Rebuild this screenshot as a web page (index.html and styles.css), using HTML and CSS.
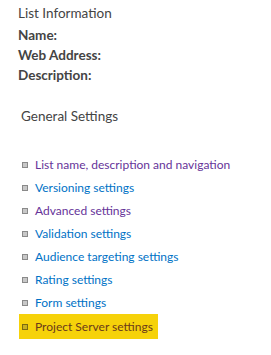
FILE: index.html
```html
<!DOCTYPE html>
<html lang="en">
<head>
    <meta charset="UTF-8">
    <title>List Settings</title>
    <link rel="stylesheet" href="styles.css">
</head>
<body>

    <!-- List information -->
    <div class="list-info">
        <h3 class="info-title">List Information</h3>
        <div class="info-row">Name:</div>
        <div class="info-row">Web Address:</div>
        <div class="info-row">Description:</div>
    </div>

    <!-- General settings -->
    <div class="settings">
        <h3 class="settings-title">General Settings</h3>
        <ul class="settings-list">
            <li><a href="#" class="visited">List name, description and navigation</a></li>
            <li><a href="#">Versioning settings</a></li>
            <li><a href="#" class="visited">Advanced settings</a></li>
            <li><a href="#">Validation settings</a></li>
            <li><a href="#">Audience targeting settings</a></li>
            <li><a href="#">Rating settings</a></li>
            <li><a href="#">Form settings</a></li>
            <li class="highlight"><a href="#">Project Server settings</a></li>
        </ul>
    </div>

</body>
</html>
```

FILE: styles.css
```css
:root {
    --txt-color: #444;
    --link-color: #0072c6;
    --visited-color: #663399;
    --mark-color: #f6d20a;
}

body {
    font-family: 'Lato', 'Noto Sans', sans-serif;
    font-size: 12px;
    color: var(--txt-color);
    background-color: #fff;
    margin: 0;
    padding: 0;
}

h3 {
    font-weight: normal;
    font-size: 13.5px;
    margin: 0;
}

.list-info {
    padding: 4px 0 0 18px;
}

.info-title {
    line-height: 18px;
    margin-bottom: 3px;
}

.info-row {
    font-weight: bold;
    font-size: 13.5px;
    line-height: 20px;
}

.settings {
    padding: 21px 0 0 21px;
}

.settings-title {
    line-height: 20px;
}

.settings-list {
    list-style: none;
    margin: 27px 0 0 0;
    padding: 0;
}

.settings-list li {
    display: flex;
    align-items: center;
    gap: 7px;
    height: 23px;
    width: 136px;
    white-space: nowrap;
    padding-left: 1px;
}

.settings-list li::before {
    content: '';
    width: 4px;
    height: 4px;
    border: 1px solid #8a8a8a;
    background-color: #c8c8c8;
    flex-shrink: 0;
}

.settings-list a {
    color: var(--link-color);
    text-decoration: none;
}

.settings-list a.visited {
    color: var(--visited-color);
}

.settings-list li.highlight {
    background-color: var(--mark-color);
    margin-left: -2px;
    padding-left: 3px;
    height: 25px;
}

.settings-list li.highlight a {
    color: #6b3a1a;
}

.settings-list li.highlight::before {
    border-color: #7a6a10;
    background-color: #c8b020;
}
```
